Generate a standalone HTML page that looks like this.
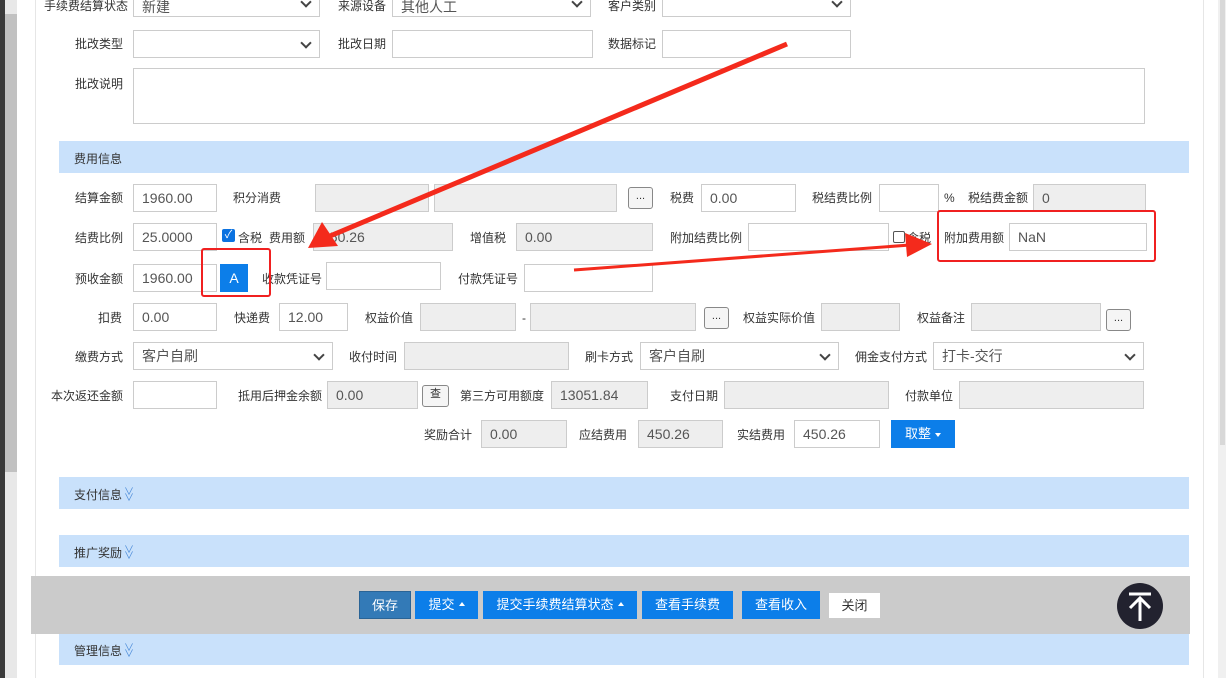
<!DOCTYPE html>
<html><head><meta charset="utf-8"><style>
*{box-sizing:border-box;margin:0;padding:0}
body{width:1226px;height:678px;overflow:hidden;background:#fff;position:relative;font-family:"Liberation Sans","Noto Sans CJK SC",sans-serif;font-size:12px;color:#333}
.a{position:absolute}
.l{position:absolute;font-size:12px;color:#333;white-space:nowrap;line-height:14px}
.i{position:absolute;border:1px solid #ccc;background:#fff;height:28px;font-size:14px;color:#555;padding:5px 0 0 8px;line-height:16px;white-space:nowrap;overflow:hidden}
.g{background:#eee}
.s:after{content:"";position:absolute;right:9px;top:8px;width:6px;height:6px;border-right:2px solid #444;border-bottom:2px solid #444;transform:rotate(45deg)}
.bar{position:absolute;left:59px;width:1130px;height:32px;background:#c9e1fb;font-size:12px;padding:9px 0 0 15px;color:#333}
.dd{position:absolute;width:25px;height:22px;border:1px solid #888;border-radius:3px;background:#f5f5f5;text-align:center;font-size:11px;line-height:16px}
.btn{position:absolute;top:591px;height:28px;background:#0c7ee9;color:#fff;font-size:13px;text-align:center;line-height:28px}
.car{display:inline-block;border-left:3px solid transparent;border-right:3px solid transparent;border-bottom:4px solid #fff;vertical-align:middle;margin-left:4px;margin-top:-3px}
.chev{display:inline-block;color:#4a8ad8;font-size:10px;line-height:6px;vertical-align:middle;margin-left:2px}
</style></head><body>
<div class="a" style="left:0;top:0;width:5px;height:678px;background:#3a3a3a"></div>
<div class="a" style="left:5px;top:0;width:12px;height:678px;background:#e8e8e8"></div>
<div class="a" style="left:5px;top:14px;width:12px;height:458px;background:#c1c1c1"></div>
<div class="a" style="left:35px;top:0;width:1px;height:678px;background:#e6e6e6"></div>
<div class="a" style="left:1203px;top:0;width:1px;height:678px;background:#e6e6e6"></div>
<div class="a" style="left:1218px;top:0;width:8px;height:678px;background:#f0f0f0"></div>
<div class="a" style="left:1220px;top:0;width:5px;height:445px;background:#d8d8d8"></div>

<!-- top rows -->
<div class="l" style="left:44px;top:-1px">手续费结算状态</div>
<div class="i s" style="left:133px;top:-11px;width:187px;padding-top:9px">新建</div>
<div class="l" style="left:338px;top:-1px">来源设备</div>
<div class="i s" style="left:392px;top:-11px;width:199px;padding-top:9px">其他人工</div>
<div class="l" style="left:608px;top:-1px">客户类别</div>
<div class="i s" style="left:662px;top:-11px;width:189px"></div>

<div class="l" style="left:75px;top:37px">批改类型</div>
<div class="i s" style="left:133px;top:30px;width:187px"></div>
<div class="l" style="left:338px;top:37px">批改日期</div>
<div class="i" style="left:392px;top:30px;width:201px"></div>
<div class="l" style="left:608px;top:37px">数据标记</div>
<div class="i" style="left:662px;top:30px;width:189px"></div>

<div class="l" style="left:75px;top:77px">批改说明</div>
<div class="i" style="left:133px;top:68px;width:1012px;height:56px"></div>

<div class="bar" style="top:141px">费用信息</div>

<!-- row1 -->
<div class="l" style="left:75px;top:191px">结算金额</div>
<div class="i" style="left:133px;top:184px;width:84px">1960.00</div>
<div class="l" style="left:233px;top:191px">积分消费</div>
<div class="i g" style="left:315px;top:184px;width:114px"></div>
<div class="i g" style="left:434px;top:184px;width:183px"></div>
<div class="dd" style="left:628px;top:187px">...</div>
<div class="l" style="left:670px;top:191px">税费</div>
<div class="i" style="left:701px;top:184px;width:95px">0.00</div>
<div class="l" style="left:812px;top:191px">税结费比例</div>
<div class="i" style="left:879px;top:184px;width:60px"></div>
<div class="l" style="left:944px;top:191px">%</div>
<div class="l" style="left:968px;top:191px">税结费金额</div>
<div class="i g" style="left:1033px;top:184px;width:113px">0</div>

<!-- row2 -->
<div class="l" style="left:75px;top:231px">结费比例</div>
<div class="i" style="left:133px;top:223px;width:84px">25.0000</div>
<div class="a" style="left:222px;top:229px;width:13px;height:13px;background:#0b72e0;border-radius:2px;color:#fff;font-size:11px;line-height:13px;text-align:center">✓</div>
<div class="l" style="left:238px;top:231px">含税</div>
<div class="l" style="left:269px;top:231px">费用额</div>
<div class="i g" style="left:313px;top:223px;width:140px">450.26</div>
<div class="l" style="left:470px;top:231px">增值税</div>
<div class="i g" style="left:516px;top:223px;width:137px">0.00</div>
<div class="l" style="left:670px;top:231px">附加结费比例</div>
<div class="i" style="left:748px;top:223px;width:141px"></div>
<div class="a" style="left:893px;top:231px;width:12px;height:12px;border:1px solid #555;border-radius:2px;background:#fff"></div>
<div class="l" style="left:907px;top:231px">含税</div>
<div class="l" style="left:944px;top:231px">附加费用额</div>
<div class="i" style="left:1009px;top:223px;width:138px">NaN</div>

<!-- row3 -->
<div class="l" style="left:75px;top:272px">预收金额</div>
<div class="i" style="left:133px;top:264px;width:84px">1960.00</div>
<div class="a" style="left:220px;top:264px;width:28px;height:28px;background:#0c7ee9;color:#fff;font-size:14px;text-align:center;line-height:28px">A</div>
<div class="l" style="left:262px;top:272px">收款凭证号</div>
<div class="i" style="left:326px;top:262px;width:115px"></div>
<div class="l" style="left:458px;top:272px">付款凭证号</div>
<div class="i" style="left:524px;top:264px;width:129px"></div>

<!-- row4 -->
<div class="l" style="left:98px;top:311px">扣费</div>
<div class="i" style="left:133px;top:303px;width:84px">0.00</div>
<div class="l" style="left:234px;top:311px">快递费</div>
<div class="i" style="left:279px;top:303px;width:69px">12.00</div>
<div class="l" style="left:365px;top:311px">权益价值</div>
<div class="i g" style="left:420px;top:303px;width:96px"></div>
<div class="l" style="left:522px;top:311px">-</div>
<div class="i g" style="left:530px;top:303px;width:166px"></div>
<div class="dd" style="left:704px;top:307px">...</div>
<div class="l" style="left:743px;top:311px">权益实际价值</div>
<div class="i g" style="left:821px;top:303px;width:79px"></div>
<div class="l" style="left:917px;top:311px">权益备注</div>
<div class="i g" style="left:971px;top:303px;width:130px"></div>
<div class="dd" style="left:1106px;top:309px">...</div>

<!-- row5 -->
<div class="l" style="left:75px;top:350px">缴费方式</div>
<div class="i s" style="left:133px;top:342px;width:200px">客户自刷</div>
<div class="l" style="left:349px;top:350px">收付时间</div>
<div class="i g" style="left:404px;top:342px;width:165px"></div>
<div class="l" style="left:585px;top:350px">刷卡方式</div>
<div class="i s" style="left:640px;top:342px;width:199px">客户自刷</div>
<div class="l" style="left:855px;top:350px">佣金支付方式</div>
<div class="i s" style="left:933px;top:342px;width:211px">打卡-交行</div>

<!-- row6 -->
<div class="l" style="left:51px;top:389px">本次返还金额</div>
<div class="i" style="left:133px;top:381px;width:84px"></div>
<div class="l" style="left:238px;top:389px">抵用后押金余额</div>
<div class="i g" style="left:327px;top:381px;width:91px">0.00</div>
<div class="dd" style="left:422px;top:385px;width:27px">查</div>
<div class="l" style="left:460px;top:389px">第三方可用额度</div>
<div class="i g" style="left:551px;top:381px;width:97px">13051.84</div>
<div class="l" style="left:670px;top:389px">支付日期</div>
<div class="i g" style="left:724px;top:381px;width:165px"></div>
<div class="l" style="left:905px;top:389px">付款单位</div>
<div class="i g" style="left:959px;top:381px;width:185px"></div>

<!-- row7 -->
<div class="l" style="left:424px;top:428px">奖励合计</div>
<div class="i g" style="left:481px;top:420px;width:86px">0.00</div>
<div class="l" style="left:579px;top:428px">应结费用</div>
<div class="i g" style="left:638px;top:420px;width:85px">450.26</div>
<div class="l" style="left:737px;top:428px">实结费用</div>
<div class="i" style="left:794px;top:420px;width:86px">450.26</div>
<div class="a" style="left:891px;top:420px;width:64px;height:28px;background:#0c7ee9;color:#fff;font-size:13px;line-height:28px;text-align:center">取整<span class="car" style="transform:rotate(180deg);margin-top:0"></span></div>

<div class="bar" style="top:477px">支付信息<span class="chev">∨<br>∨</span></div>
<div class="bar" style="top:535px">推广奖励<span class="chev">∨<br>∨</span></div>
<div class="bar" style="top:633px">管理信息<span class="chev">∨<br>∨</span></div>

<!-- footer -->
<div class="a" style="left:31px;top:576px;width:1159px;height:58px;background:#cbcbcb"></div>
<div class="btn" style="left:359px;width:52px;background:#337ab7;border:1px solid #2a6496">保存</div>
<div class="btn" style="left:415px;width:63px">提交<span class="car"></span></div>
<div class="btn" style="left:483px;width:154px">提交手续费结算状态<span class="car"></span></div>
<div class="btn" style="left:642px;width:91px">查看手续费</div>
<div class="btn" style="left:742px;width:78px">查看收入</div>
<div class="btn" style="left:829px;top:593px;height:25px;line-height:25px;width:51px;background:#fff;color:#333">关闭</div>
<svg class="a" style="left:1117px;top:583px" width="46" height="46" viewBox="0 0 46 46"><circle cx="23" cy="23" r="23" fill="#22222f"/><path d="M12 11H34M23 38V15M13 25L23 15L33 25" stroke="#fff" stroke-width="3" fill="none"/></svg>

<!-- annotations -->
<div class="a" style="left:201px;top:248px;width:70px;height:49px;border:2px solid #f02020;border-radius:3px"></div>
<div class="a" style="left:937px;top:210px;width:219px;height:52px;border:2px solid #f02020;border-radius:3px"></div>
<svg class="a" style="left:0;top:0" width="1226" height="678">
<path d="M787 44L330 236" stroke="#f42a1c" stroke-width="5" fill="none"/>
<path d="M308 248L322 222L338 246Z" fill="#f42a1c"/>
<path d="M574 270L910 245" stroke="#f42a1c" stroke-width="3" fill="none"/>
<path d="M932 244L905 233L907 257Z" fill="#f42a1c"/>
</svg>
</body></html>
